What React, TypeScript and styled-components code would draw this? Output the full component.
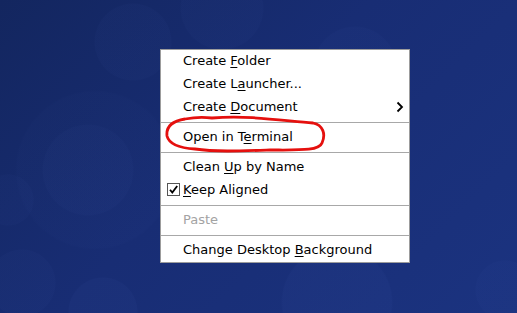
import React from 'react'
import styled, { createGlobalStyle } from 'styled-components'

const GlobalStyle = createGlobalStyle`
  html, body {
    margin: 0;
    padding: 0;
    overflow: hidden;
  }
`

const bubble = (x: number, y: number, r: number, a: number) =>
  `radial-gradient(circle ${r}px at ${x}px ${y}px, rgba(120,150,255,${a}) 97%, rgba(120,150,255,0) 100%)`

const Desktop = styled.div`
  position: relative;
  width: 517px;
  height: 313px;
  overflow: hidden;
  font-family: 'DejaVu Sans', 'Liberation Sans', sans-serif;
  background:
    ${bubble(133, 42, 39, 0.025)},
    ${bubble(222, 8, 42, 0.025)},
    ${bubble(355, 68, 42, 0.025)},
    ${bubble(88, 170, 46, 0.025)},
    ${bubble(95, 170, 80, 0.015)},
    ${bubble(8, 200, 26, 0.02)},
    ${bubble(22, 283, 34, 0.025)},
    ${bubble(103, 312, 35, 0.03)},
    ${bubble(337, 302, 56, 0.03)},
    ${bubble(505, 290, 30, 0.02)},
    linear-gradient(135deg, #13265f 0%, #182d74 45%, #1b3380 100%);
`

const Menu = styled.div`
  position: absolute;
  left: 160px;
  top: 49px;
  width: 248px;
  background: #ffffff;
  border: 1px solid #9c9c9c;
  display: flex;
  flex-direction: column;
`

const Row = styled.div<{ $disabled?: boolean }>`
  height: 23px;
  box-sizing: border-box;
  display: flex;
  align-items: center;
  padding: 0 5px 2px 6px;
  font-size: 13px;
  color: ${(p) => (p.$disabled ? '#a3a3a3' : '#000000')};
`

const Gutter = styled.div`
  width: 16px;
  display: flex;
  align-items: center;
`

const Label = styled.span`
  flex: 1;
  white-space: nowrap;
  u {
    text-underline-offset: 2px;
  }
`

const Separator = styled.div`
  height: 7px;
  display: flex;
  align-items: center;
  &::after {
    content: '';
    flex: 1;
    height: 1px;
    background: #a8a8a8;
  }
`

const Annotation = styled.svg`
  position: absolute;
  left: 0;
  top: 0;
  pointer-events: none;
`

const CheckBox = () => (
  <svg width='13' height='13' viewBox='0 0 13 13'>
    <rect x='0.5' y='0.5' width='12' height='12' fill='#fff' stroke='#555' />
    <path d='M3 6.8 L5.3 9.6 L10.2 3' fill='none' stroke='#000' strokeWidth='1.8' />
  </svg>
)

const Chevron = () => (
  <svg width='8' height='12' viewBox='0 0 8 12'>
    <path d='M1.5 1.5 L6 6 L1.5 10.5' fill='none' stroke='#000' strokeWidth='1.8' />
  </svg>
)

type Item = {
  pre: string
  key?: string
  post?: string
  sub?: boolean
  checked?: boolean
  disabled?: boolean
}

const groups: Item[][] = [
  [
    { pre: 'Create ', key: 'F', post: 'older' },
    { pre: 'Create L', key: 'a', post: 'uncher...' },
    { pre: 'Create ', key: 'D', post: 'ocument', sub: true },
  ],
  [{ pre: 'Open in T', key: 'e', post: 'rminal' }],
  [
    { pre: 'Clean ', key: 'U', post: 'p by Name' },
    { pre: '', key: 'K', post: 'eep Aligned', checked: true },
  ],
  [{ pre: 'Paste', disabled: true }],
  [{ pre: 'Change Desktop ', key: 'B', post: 'ackground' }],
]

const App = () => {
  return (
    <Desktop>
      <GlobalStyle />
      <Menu>
        {groups.map((group, gi) => (
          <React.Fragment key={gi}>
            {gi > 0 && <Separator />}
            {group.map((item) => (
              <Row key={item.pre + (item.post || '')} $disabled={item.disabled}>
                <Gutter>{item.checked && <CheckBox />}</Gutter>
                <Label>
                  {item.pre}
                  {item.key && <u>{item.key}</u>}
                  {item.post}
                </Label>
                {item.sub && <Chevron />}
              </Row>
            ))}
          </React.Fragment>
        ))}
      </Menu>
      <Annotation width='517' height='313' viewBox='0 0 517 313'>
        <path
          d='M212 118 C250 115 285 121 313 123 C323 125 326 134 322 143 C319 151 300 150 270 150 C240 151 215 152 195 149 C179 148 169 144 167 136 C166 127 172 121 185 119 C195 117 205 117 212 118'
          fill='none'
          stroke='#e5100e'
          strokeWidth='2.8'
          strokeLinecap='round'
        />
      </Annotation>
    </Desktop>
  )
}

export default App
